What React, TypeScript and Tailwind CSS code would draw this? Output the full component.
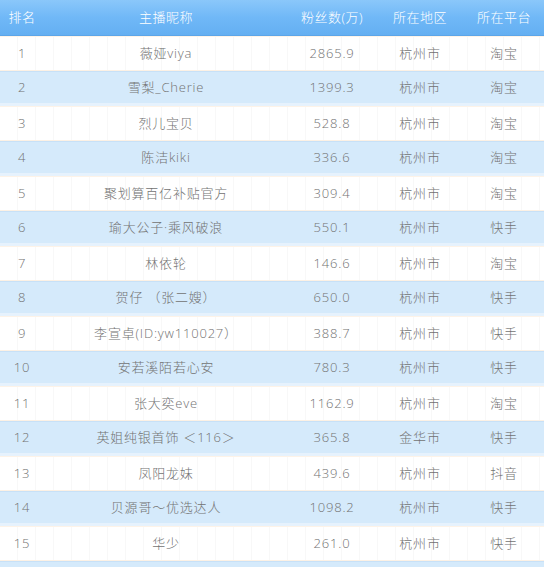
import React from "react";

const rows: [string, string, string, string, string][] = [
  ["1", "薇娅viya", "2865.9", "杭州市", "淘宝"],
  ["2", "雪梨_Cherie", "1399.3", "杭州市", "淘宝"],
  ["3", "烈儿宝贝", "528.8", "杭州市", "淘宝"],
  ["4", "陈洁kiki", "336.6", "杭州市", "淘宝"],
  ["5", "聚划算百亿补贴官方", "309.4", "杭州市", "淘宝"],
  ["6", "瑜大公子·乘风破浪", "550.1", "杭州市", "快手"],
  ["7", "林依轮", "146.6", "杭州市", "淘宝"],
  ["8", "贺仔 （张二嫂）", "650.0", "杭州市", "快手"],
  ["9", "李宣卓(ID:yw110027）", "388.7", "杭州市", "快手"],
  ["10", "安若溪陌若心安", "780.3", "杭州市", "快手"],
  ["11", "张大奕eve", "1162.9", "杭州市", "淘宝"],
  ["12", "英姐纯银首饰 ＜116＞", "365.8", "金华市", "快手"],
  ["13", "凤阳龙妹", "439.6", "杭州市", "抖音"],
  ["14", "贝源哥～优选达人", "1098.2", "杭州市", "快手"],
  ["15", "华少", "261.0", "杭州市", "快手"],
];

const font = { fontFamily: '"Open Sans", "Noto Sans CJK SC", sans-serif' };

export default function App() {
  return (
    <div
      className="w-[544px] h-[567px] overflow-hidden bg-white"
      style={font}
    >
      <div className="flex h-[36px] items-center text-[13px] font-light text-white tracking-[0.5px] bg-gradient-to-b from-[#8ac7fa] via-[#70b8f7] to-[#64aff2] border-b border-[#5ca5e8]">
        <div className="w-[44px] text-center">排名</div>
        <div className="w-[244px] text-center">主播昵称</div>
        <div className="w-[88px] text-center">粉丝数(万)</div>
        <div className="w-[88px] text-center">所在地区</div>
        <div className="w-[80px] text-center">所在平台</div>
      </div>
      {rows.map((r, i) => {
        const blue = i % 2 === 1;
        return (
          <div
            key={i}
            className={
              blue
                ? "flex h-[35px] items-center text-[13px] font-light text-[#727272] tracking-[0.8px] bg-[#d5eafb] border-t border-[#c8e1f7] border-b-[3px] border-b-[#e6f2fd]"
                : "flex h-[35px] items-center text-[13px] font-light text-[#727272] tracking-[0.8px] bg-white bg-[repeating-linear-gradient(90deg,transparent_0px,transparent_17px,#f8f8f8_17px,#f8f8f8_18px)] border-t border-[#fdf3e8] border-b border-b-[#fcf1e5]"
            }
          >
            <div className="w-[44px] text-center">{r[0]}</div>
            <div className="w-[244px] text-center">{r[1]}</div>
            <div className="w-[88px] text-center">{r[2]}</div>
            <div className="w-[88px] text-center">{r[3]}</div>
            <div className="w-[80px] text-center">{r[4]}</div>
          </div>
        );
      })}
      <div className="h-[35px] bg-[#d5eafb] border-t border-[#c8e1f7]" />
    </div>
  );
}
